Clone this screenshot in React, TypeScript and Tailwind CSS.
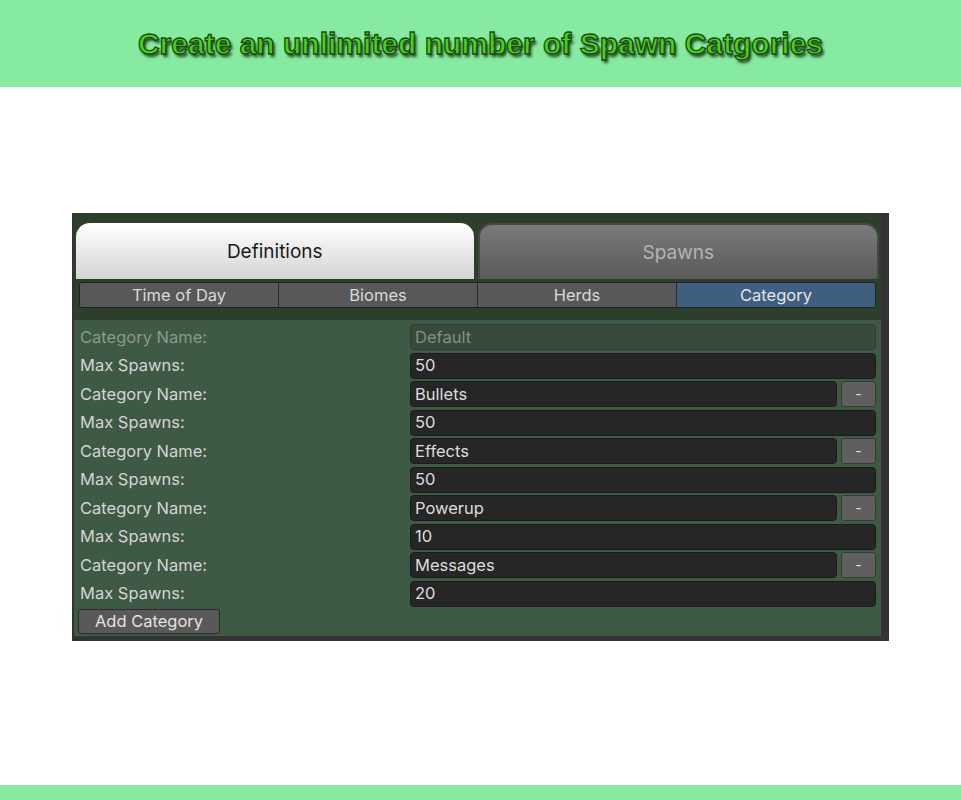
import React from 'react';

const ui = { fontFamily: 'Inter, "Noto Sans", "Liberation Sans", sans-serif' };

const rows = [
  { name: 'Default', max: '50', locked: true },
  { name: 'Bullets', max: '50' },
  { name: 'Effects', max: '50' },
  { name: 'Powerup', max: '10' },
  { name: 'Messages', max: '20' },
];

function Field({ value, dim }: { value: string; dim?: boolean }) {
  return (
    <div
      className={`flex-1 h-[26px] rounded-[4px] border px-[4px] flex items-center text-[16.5px] ${
        dim ? 'bg-[#384a3b] border-[#2f3d31] text-[#7f8f80]' : 'bg-[#262626] border-[#1b1b1b] text-[#dcdcdc]'
      }`}
    >
      {value}
    </div>
  );
}

function Row({ label, value, dim, removable }: { label: string; value: string; dim?: boolean; removable?: boolean }) {
  return (
    <div className="flex items-center h-[28.5px]">
      <div className={`w-[330px] text-[16.5px] ${dim ? 'text-[#8a9a8b]' : 'text-[#d4d4d4]'}`}>{label}</div>
      <div className="flex-1 flex items-center gap-[4px]">
        <Field value={value} dim={dim} />
        {removable && (
          <div className="w-[35px] h-[26px] rounded-[3px] bg-[#5f5f5f] border border-[#3a3a3a] flex items-center justify-center text-[#e0e0e0] text-[14px] leading-none">
            -
          </div>
        )}
      </div>
    </div>
  );
}

export default function App() {
  const subTabs = ['Time of Day', 'Biomes', 'Herds', 'Category'];
  return (
    <div className="w-[961px] h-[800px] bg-white flex flex-col" style={ui}>
      <div className="h-[87px] bg-[#86eba0] flex items-center justify-center">
        <h1
          className="text-[30px] font-bold text-[#41d41c] [-webkit-text-stroke:1.3px_#1d4a12] [text-shadow:2px_3px_3px_#1f3f1a]"
          style={{ fontFamily: '"Liberation Sans", Arial, sans-serif' }}
        >
          Create an unlimited number of Spawn Catgories
        </h1>
      </div>

      <div className="mt-[126px] ml-[72px] w-[817px] h-[428px] flex flex-col bg-[#333333] pl-[2px] pr-[8px] pb-[5px]">
        <div className="bg-[#2d3e2d] pt-[10px] pl-[2px] pr-[2px] pb-[12px]">
          <div className="flex gap-[4px] h-[56px]">
            <div className="flex-1 rounded-t-[14px] bg-gradient-to-b from-[#ffffff] to-[#d4d4d4] flex items-center justify-center pt-[2px] text-[19px] text-[#1a1a1a]">
              Definitions
            </div>
            <div className="flex-1 rounded-t-[14px] bg-gradient-to-b from-[#7a7a7a] to-[#5a5a5a] border-2 border-b-0 border-[#474747] flex items-center justify-center pt-[2px] text-[19px] text-[#b4b4b4]">
              Spawns
            </div>
          </div>
          <div className="mt-[3px] mx-[3px] flex h-[26px] rounded-[3px] border border-[#222] overflow-hidden">
            {subTabs.map((t, i) => (
              <div
                key={t}
                className={`flex-1 flex items-center justify-center text-[16.5px] ${i > 0 ? 'border-l border-[#2a2a2a]' : ''} ${
                  t === 'Category' ? 'bg-[#3f5f80] text-[#e4e4e4]' : 'bg-[#585858] text-[#d8d8d8]'
                }`}
              >
                {t}
              </div>
            ))}
          </div>
        </div>
        <div className="flex-1 bg-[#3e5944] pl-[6px] pr-[5px] pt-[3px]">
          {rows.map((r, i) => (
            <React.Fragment key={r.name}>
              <Row label="Category Name:" value={r.name} dim={r.locked} removable={i > 0} />
              <Row label="Max Spawns:" value={r.max} />
            </React.Fragment>
          ))}
          <div className="mt-[1px] -ml-[2px] w-[142px] h-[25px] rounded-[3px] bg-[#595959] border border-[#2a2a2a] flex items-center justify-center text-[16.5px] text-[#e2e2e2]">
            Add Category
          </div>
        </div>
      </div>

      <div className="mt-auto h-[15px] bg-[#86eba0]" />
    </div>
  );
}
